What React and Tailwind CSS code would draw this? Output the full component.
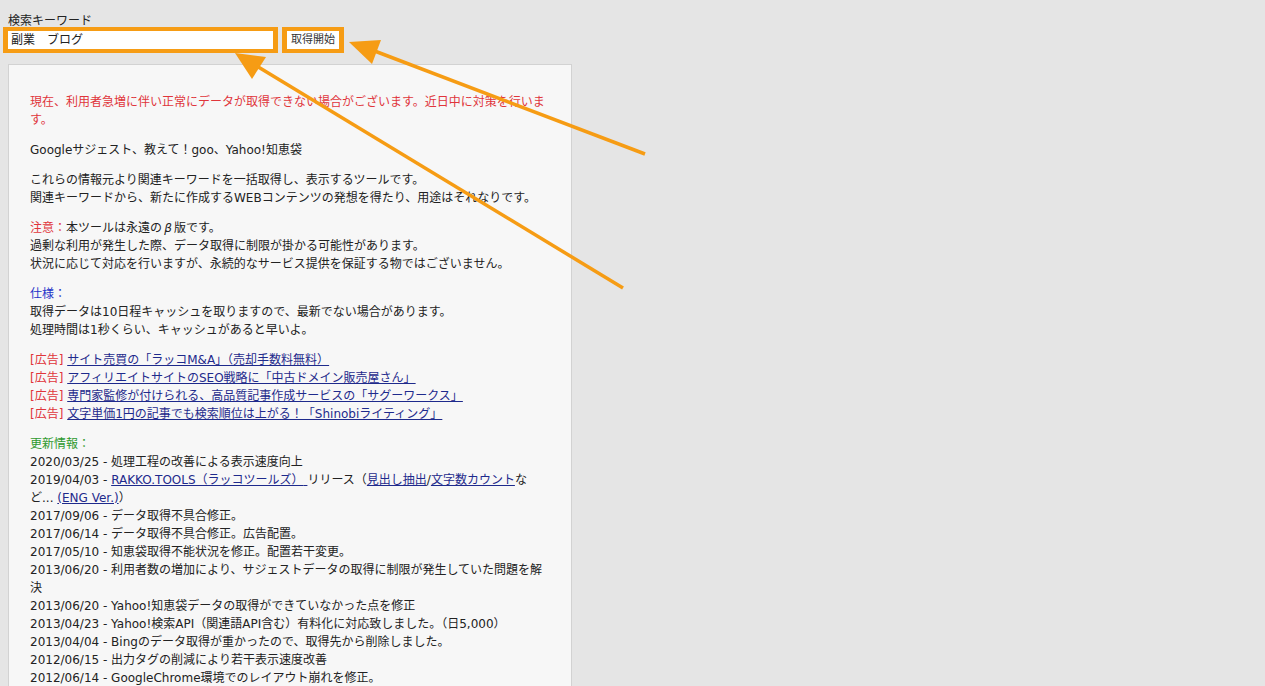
import React from "react";

const red = "text-[#e0353b]";
const link = "text-[#1e2a8c] underline";

const ads = [
  "サイト売買の「ラッコM&A」（売却手数料無料）",
  "アフィリエイトサイトのSEO戦略に「中古ドメイン販売屋さん」",
  "専門家監修が付けられる、高品質記事作成サービスの「サグーワークス」",
  "文字単価1円の記事でも検索順位は上がる！「Shinobiライティング」",
];

const updates = [
  "2017/09/06 - データ取得不具合修正。",
  "2017/06/14 - データ取得不具合修正。広告配置。",
  "2017/05/10 - 知恵袋取得不能状況を修正。配置若干変更。",
  "2013/06/20 - 利用者数の増加により、サジェストデータの取得に制限が発生していた問題を解決",
  "2013/06/20 - Yahoo!知恵袋データの取得ができていなかった点を修正",
  "2013/04/23 - Yahoo!検索API（関連語API含む）有料化に対応致しました。（日5,000）",
  "2013/04/04 - Bingのデータ取得が重かったので、取得先から削除しました。",
  "2012/06/15 - 出力タグの削減により若干表示速度改善",
  "2012/06/14 - GoogleChrome環境でのレイアウト崩れを修正。",
];

export default function App() {
  return (
    <div className="relative h-[686px] overflow-hidden bg-[#e5e5e5] font-['DejaVu_Sans','Noto_Sans_CJK_JP',sans-serif] text-[12px] leading-[18px] text-[#222]">
      <div className="pl-[8px] pt-[16px]">
        <div className="leading-[11px]">検索キーワード</div>
        <div className="flex -ml-[5px]">
          <div className="border-x-[5px] border-y-[4px] border-[#f69c14]">
            <input
              type="text"
              defaultValue="副業　ブログ"
              className="block h-[18px] w-[265px] bg-white px-[3px] text-[12px] text-[#222] outline-none"
            />
          </div>
          <div className="ml-[4px] border-x-[5px] border-y-[4px] border-[#f69c14]">
            <button className="block h-[18px] w-[52px] bg-white text-[11px] leading-[18px] text-[#333]">
              取得開始
            </button>
          </div>
        </div>

        <div className="mt-[11px] w-[564px] border border-[#d2d2d2] bg-[#f7f7f7] pl-[21px] pr-[20px] pt-[28px] pb-[20px]">
          <p className={`mb-[12px] ${red}`}>
            現在、利用者急増に伴い正常にデータが取得できない場合がございます。近日中に対策を行います。
          </p>
          <p className="mb-[12px]">Googleサジェスト、教えて！goo、Yahoo!知恵袋</p>
          <p className="mb-[12px]">
            これらの情報元より関連キーワードを一括取得し、表示するツールです。
            <br />
            関連キーワードから、新たに作成するWEBコンテンツの発想を得たり、用途はそれなりです。
          </p>
          <p className="mb-[12px]">
            <span className={red}>注意：</span>本ツールは永遠の
            <span className="inline-block w-[12px] text-center italic">β</span>版です。
            <br />
            過剰な利用が発生した際、データ取得に制限が掛かる可能性があります。
            <br />
            状況に応じて対応を行いますが、永続的なサービス提供を保証する物ではございません。
          </p>
          <p className="mb-[12px]">
            <span className="text-[#2433c8]">仕様：</span>
            <br />
            取得データは10日程キャッシュを取りますので、最新でない場合があります。
            <br />
            処理時間は1秒くらい、キャッシュがあると早いよ。
          </p>
          <div className="mb-[12px]">
            {ads.map((a) => (
              <div key={a}>
                <span className={red}>[広告]</span>{" "}
                <a href="#" className={link}>
                  {a}
                </a>
              </div>
            ))}
          </div>
          <div>
            <div className="text-[#2f9a2f]">更新情報：</div>
            <div>2020/03/25 - 処理工程の改善による表示速度向上</div>
            <div>
              2019/04/03 -{" "}
              <a href="#" className={link}>
                RAKKO.TOOLS（ラッコツールズ）{" "}
              </a>
              リリース（
              <a href="#" className={link}>
                見出し抽出
              </a>
              /
              <a href="#" className={link}>
                文字数カウント
              </a>
              な
              <br />
              ど...{" "}
              <a href="#" className={link}>
                (ENG Ver.)
              </a>
              ）
            </div>
            {updates.map((u, i) => (
              <div key={i}>{u}</div>
            ))}
          </div>
        </div>
      </div>

      <svg
        className="pointer-events-none absolute left-0 top-0"
        width="1265"
        height="686"
      >
        <line x1="645" y1="154" x2="372" y2="50" stroke="#f69c14" strokeWidth="3.5" />
        <polygon points="349,42 381,40 372,64" fill="#f69c14" />
        <line x1="623" y1="288" x2="255" y2="65" stroke="#f69c14" strokeWidth="3.5" />
        <polygon points="235,53 266,57 252,79" fill="#f69c14" />
      </svg>
    </div>
  );
}
